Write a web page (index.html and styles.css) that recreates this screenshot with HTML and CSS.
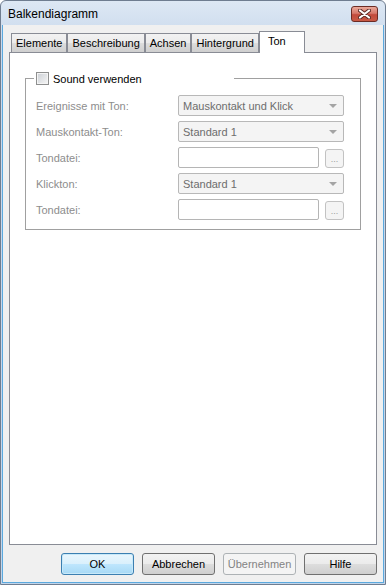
FILE: index.html
```html
<!DOCTYPE html>
<html>
  <head>
    <title>Balkendiagramm</title>
    <link rel="stylesheet" href="styles.css">
  </head>
  <body>
    <div class="window">
      <div class="titlebar">
        <span class="title">Balkendiagramm</span>
        <span class="close">
          <svg width="13" height="10" viewBox="0 0 13 10">
            <path d="M2 1.5 L11 8.5 M11 1.5 L2 8.5" stroke="#5a2a24" stroke-width="4" stroke-linecap="round"/>
            <path d="M2 1.5 L11 8.5 M11 1.5 L2 8.5" stroke="#fff" stroke-width="2.2" stroke-linecap="round"/>
          </svg>
        </span>
      </div>

      <div class="client">
        <div class="tabs">
          <span class="tab">Elemente</span>
          <span class="tab">Beschreibung</span>
          <span class="tab">Achsen</span>
          <span class="tab">Hintergrund</span>
          <span class="tab active">Ton</span>
        </div>

        <div class="panel">
          <fieldset class="group">
            <legend>
              <span class="check"></span>
              <span>Sound verwenden</span>
            </legend>

            <div class="rows">
              <span class="lbl">Ereignisse mit Ton:</span>
              <div class="combo"><span>Mauskontakt und Klick</span><i class="arrow"></i></div>

              <span class="lbl">Mauskontakt-Ton:</span>
              <div class="combo"><span>Standard 1</span><i class="arrow"></i></div>

              <span class="lbl">Tondatei:</span>
              <div class="file"><span class="edit"></span><span class="dots">...</span></div>

              <span class="lbl">Klickton:</span>
              <div class="combo"><span>Standard 1</span><i class="arrow"></i></div>

              <span class="lbl">Tondatei:</span>
              <div class="file"><span class="edit"></span><span class="dots">...</span></div>
            </div>
          </fieldset>
        </div>

        <div class="footer">
          <button class="btn default">OK</button>
          <button class="btn">Abbrechen</button>
          <button class="btn" disabled>Übernehmen</button>
          <button class="btn">Hilfe</button>
        </div>
      </div>
    </div>
  </body>
</html>
```

FILE: styles.css
```css
body {
  margin: 0;
  font-family: "Liberation Sans", Arial, sans-serif;
  font-size: 11px;
}

.window {
  width: 386px;
  height: 585px;
  box-sizing: border-box;
  display: flex;
  flex-direction: column;
  border: 1px solid #6f7d90;
  border-radius: 6px 6px 0 0;
  padding: 0 1px 1px 1px;
  background: linear-gradient(#dde8f4, #c9d9ec 40px, #c2d5ea);
}

/* title bar */
.titlebar {
  height: 24px;
  display: flex;
  align-items: center;
  justify-content: space-between;
  padding: 0 6px 0 6px;
}
.title {
  font-size: 12px;
  color: #000;
  margin-top: 1px;
}
.close {
  width: 27px;
  height: 16px;
  box-sizing: border-box;
  margin-top: 1px;
  display: flex;
  align-items: center;
  justify-content: center;
  border: 1px solid #6b2c25;
  border-radius: 3px;
  background: linear-gradient(#e9a99b 0%, #d7786a 45%, #c24a3c 55%, #c95a45 100%);
}

/* dialog body */
.client {
  flex: 1;
  display: flex;
  flex-direction: column;
  background: #f0f0f0;
  border: 1px solid #5ba9de;
  border-top: none;
  padding: 6px 6px 0 6px;
}

.tabs {
  height: 21px;
  display: flex;
  align-items: flex-end;
  padding-left: 2px;
}
.tab {
  height: 19px;
  box-sizing: border-box;
  padding: 0 4px;
  line-height: 18px;
  border: 1px solid #898c95;
  border-bottom: none;
  background: linear-gradient(#f2f2f2, #ebebeb 50%, #dddddd 51%, #cfcfcf);
  color: #000;
}
.tab.active {
  height: 22px;
  line-height: 19px;
  margin-bottom: -1px;
  padding: 0 18px 0 8px;
  background: #fff;
  position: relative;
  z-index: 1;
}

.panel {
  flex: 1;
  background: #fff;
  border: 1px solid #898c95;
  padding: 0 16px 0 15px;
}

.group {
  margin: 18px 0 0 0;
  padding: 9px 16px 9px 10px;
  border: 1px solid #a0a0a0;
}
.group legend {
  width: 200px;
  box-sizing: border-box;
  height: 15px;
  padding: 0 2px;
  margin-left: -2px;
  display: flex;
  align-items: center;
  gap: 4px;
  color: #000;
}
.check {
  width: 13px;
  height: 13px;
  box-sizing: border-box;
  border: 1px solid #8e8f8f;
  background: linear-gradient(135deg, #cbcfd5, #f6f6f6);
  box-shadow: inset 0 0 0 1px #f4f4f4;
}

.rows {
  display: grid;
  grid-template-columns: 142px 1fr;
  grid-auto-rows: 21px;
  row-gap: 5px;
  align-items: center;
}
.lbl {
  color: #8d8d8d;
}

.combo {
  height: 21px;
  box-sizing: border-box;
  display: flex;
  align-items: center;
  justify-content: space-between;
  padding: 0 6px 0 4px;
  border: 1px solid #b8b8b8;
  border-radius: 2px;
  background: #f4f4f4;
  color: #6d6d6d;
}
.arrow {
  width: 0;
  height: 0;
  border-left: 4px solid transparent;
  border-right: 4px solid transparent;
  border-top: 4px solid #a4a4a4;
  margin-top: 1px;
}

.file {
  height: 21px;
  display: flex;
  align-items: flex-end;
  gap: 6px;
}
.edit {
  width: 141px;
  height: 21px;
  box-sizing: border-box;
  border: 1px solid #b5b5b5;
  border-radius: 2px;
  background: #fff;
}
.dots {
  width: 19px;
  height: 19px;
  box-sizing: border-box;
  border: 1px solid #c2c2c2;
  border-radius: 3px;
  background: #f4f4f4;
  color: #9d9d9d;
  font-size: 9px;
  line-height: 19px;
  text-align: center;
}

/* buttons */
.footer {
  display: flex;
  justify-content: flex-end;
  gap: 8px;
  padding: 8px 0 7px 0;
}
.btn {
  width: 73px;
  height: 22px;
  padding: 0;
  font-family: "Liberation Sans", Arial, sans-serif;
  font-size: 11px;
  color: #000;
  border: 1px solid #707070;
  border-radius: 3px;
  background: linear-gradient(#f2f2f2, #ebebeb 50%, #dddddd 51%, #cfcfcf);
}
.btn.default {
  border-color: #3c7fb1;
  background: linear-gradient(#eaf6fd, #d9f0fc 50%, #bee6fd 51%, #a7d9f5);
  box-shadow: inset 0 0 0 1px #c8e9f9;
}
.btn:disabled {
  border-color: #adb2b5;
  background: #f4f4f4;
  color: #838383;
}
```
